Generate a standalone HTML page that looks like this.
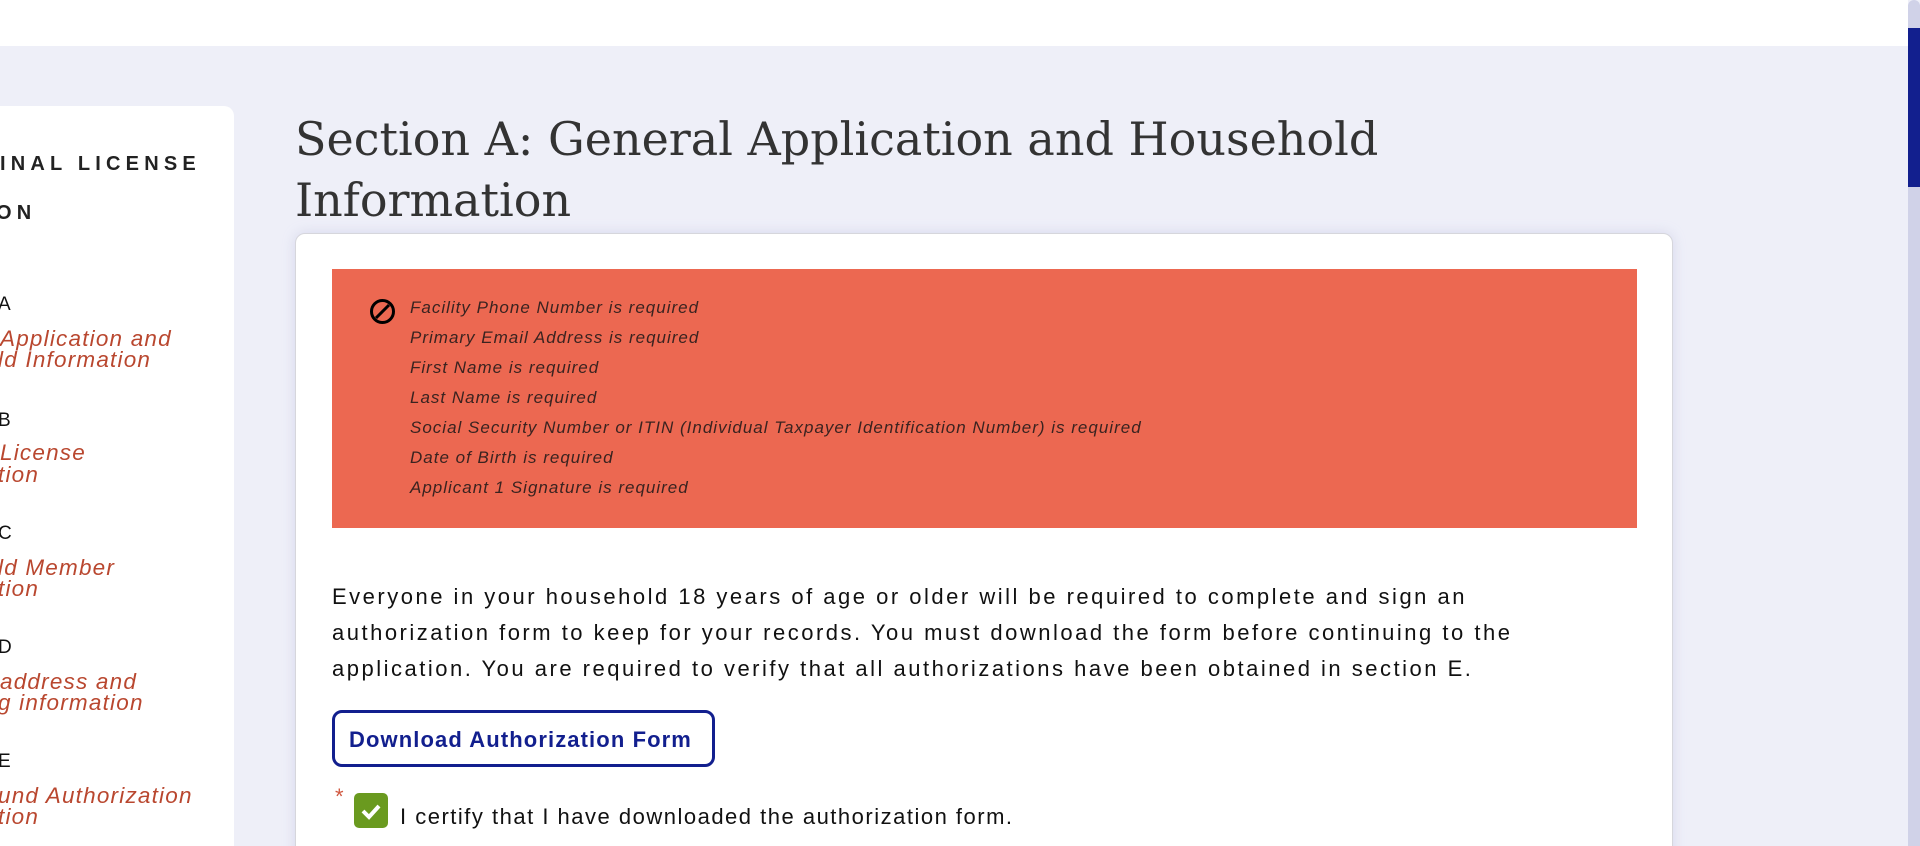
<!DOCTYPE html>
<html><head><meta charset="utf-8"><style>
*{margin:0;padding:0;box-sizing:border-box}
html,body{width:1920px;height:846px;overflow:hidden}
body{background:#eeeff8;font-family:"Liberation Sans","DejaVu Sans",sans-serif;position:relative}
.top{position:absolute;left:0;top:0;width:1908px;height:46px;background:#fff}
.sb{position:absolute;left:1908px;top:0;width:12px;height:846px;background:#d0d2e8;border-radius:6px 6px 0 0}
.thumb{position:absolute;left:1908px;top:28px;width:12px;height:159px;background:#121f8e}
.side{position:absolute;left:-20px;top:106px;width:254px;height:740px;background:#fff;border-radius:10px 10px 0 0;overflow:hidden}
.s{position:absolute;white-space:nowrap}
.h{font-weight:bold;letter-spacing:5.2px;font-size:20px;color:#222}
.l{font-size:19px;color:#111;letter-spacing:1px}
.i{font-style:italic;font-size:22.5px;color:#b9472f;letter-spacing:1.2px;line-height:21px}
h1{position:absolute;left:295px;top:109px;font-family:"DejaVu Serif","Liberation Serif",serif;font-weight:normal;font-size:46px;line-height:61px;color:#333;width:1200px}
.card{position:absolute;left:295px;top:233px;width:1378px;height:640px;background:#fff;border:1px solid #d6d6dc;border-radius:10px;box-shadow:0 0 12px rgba(180,180,220,.4)}
.err{position:absolute;left:332px;top:269px;width:1305px;height:259px;background:#ec6851}
.e{position:absolute;left:410px;font-style:italic;font-size:17px;color:#3a2320;letter-spacing:1px;white-space:nowrap}
.p{position:absolute;left:332px;top:579px;font-size:22px;line-height:36px;color:#111;letter-spacing:2.5px;white-space:nowrap}
.btn{position:absolute;left:332px;top:710px;width:383px;height:57px;border:3px solid #121f8e;border-radius:10px;color:#121f8e;font-weight:bold;font-size:22px;padding:14px 0 0 14px;letter-spacing:1.1px;white-space:nowrap}
.chk{position:absolute;left:354px;top:793px;width:34px;height:35px;background:#6a9a1f;border-radius:5px}
</style></head><body>
<div class="top"></div>
<div class="sb"></div><div class="thumb"></div>
<div class="side">
<div class="s h" style="left:20px;top:47px">INAL LICENSE</div>
<div class="s h" style="left:16px;top:96px">ON</div>
<div class="s l" style="left:18px;top:188px">A</div>
<div class="s i" style="left:20px;top:222px">Application and</div>
<div class="s i" style="left:18px;top:243px">ld Information</div>
<div class="s l" style="left:18px;top:304px">B</div>
<div class="s i" style="left:20px;top:336px">License</div>
<div class="s i" style="left:18px;top:358px">tion</div>
<div class="s l" style="left:18px;top:417px">C</div>
<div class="s i" style="left:18px;top:451px">ld Member</div>
<div class="s i" style="left:18px;top:472px">tion</div>
<div class="s l" style="left:18px;top:531px">D</div>
<div class="s i" style="left:20px;top:565px">address and</div>
<div class="s i" style="left:18px;top:586px">g information</div>
<div class="s l" style="left:18px;top:645px">E</div>
<div class="s i" style="left:18px;top:679px">und Authorization</div>
<div class="s i" style="left:18px;top:700px">tion</div>
</div>
<h1>Section A: General Application and Household Information</h1>
<div class="card"></div>
<div class="err"></div>
<svg style="position:absolute;left:369px;top:298px" width="27" height="27" viewBox="0 0 27 27"><circle cx="13.5" cy="13.5" r="11" fill="none" stroke="#000" stroke-width="3"/><line x1="7" y1="20" x2="20" y2="7" stroke="#000" stroke-width="3"/></svg>
<div class="e" style="top:298px">Facility Phone Number is required</div>
<div class="e" style="top:328px">Primary Email Address is required</div>
<div class="e" style="top:358px">First Name is required</div>
<div class="e" style="top:388px">Last Name is required</div>
<div class="e" style="top:418px">Social Security Number or ITIN (Individual Taxpayer Identification Number) is required</div>
<div class="e" style="top:448px">Date of Birth is required</div>
<div class="e" style="top:478px">Applicant 1 Signature is required</div>
<div class="p">Everyone in your household 18 years of age or older will be required to complete and sign an<br>authorization form to keep for your records. You must download the form before continuing to the<br>application. You are required to verify that all authorizations have been obtained in section E.</div>
<div class="btn">Download Authorization Form</div>
<div style="position:absolute;left:335px;top:784px;color:#d0573f;font-size:22px">*</div>
<div class="chk"><svg width="34" height="35" viewBox="0 0 34 35"><path d="M9 18l6 6 10-11" fill="none" stroke="#fff" stroke-width="4"/></svg></div>
<div style="position:absolute;left:400px;top:804px;font-size:22px;color:#111;letter-spacing:1.5px;white-space:nowrap">I certify that I have downloaded the authorization form.</div>
</body></html>
